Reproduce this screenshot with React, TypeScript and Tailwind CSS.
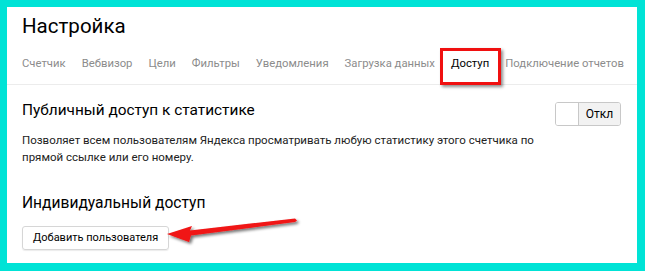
import React from "react";

const tabs = [
  "Счетчик",
  "Вебвизор",
  "Цели",
  "Фильтры",
  "Уведомления",
  "Загрузка данных",
  "Доступ",
  "Подключение отчетов",
];

export default function App() {
  return (
    <div
      className="relative w-[645px] h-[271px] bg-[#00e3d6] pl-[7px] pt-[7px] pr-[8px] pb-[8px] overflow-hidden"
      style={{ fontFamily: 'Roboto, "Liberation Sans", Arial, sans-serif' }}
    >
      <div className="relative bg-white h-full flex flex-col">
        <div className="mt-[4px] px-[15px] text-[20.5px] leading-[30px] text-black">
          Настройка
        </div>
        <div className="mt-[7px] h-[37px] flex items-center gap-[16px] px-[15px] border-b border-[#ececec] whitespace-nowrap">
          {tabs.map((t) => (
            <div
              key={t}
              className={
                "relative h-full flex items-center pb-[3px] text-[11.3px] " +
                (t === "Доступ" ? "text-black" : "text-[#8c8c8c]")
              }
            >
              {t}
              {t === "Доступ" && (
                <div className="absolute -left-[11px] -right-[12px] top-0 -bottom-[1px] border-[3px] border-[#f01010] shadow-[2px_2px_3px_rgba(0,0,0,0.45)]" />
              )}
            </div>
          ))}
        </div>
        <div className="flex justify-between items-start px-[15px]">
          <div className="mt-[14px] text-[15.4px] leading-[22px] text-black">
            Публичный доступ к статистике
          </div>
          <div className="mt-[17px] mr-[1px] flex h-[24px] w-[66px] rounded-[3px] border border-[#c8c8c8] overflow-hidden">
            <div className="w-[23px] h-full bg-white border-r border-[#c8c8c8]" />
            <div className="flex-1 bg-[#f2f2f2] flex items-center justify-center text-[12px] text-black">
              Откл
            </div>
          </div>
        </div>
        <div className="mt-[6px] px-[15px] text-[11.5px] leading-[17px] text-[#222] whitespace-nowrap">
          Позволяет всем пользователям Яндекса просматривать любую статистику этого счетчика по
          <br />
          прямой ссылке или его номеру.
        </div>
        <div className="mt-[26px] px-[15px] text-[15.6px] leading-[22px] text-black">
          Индивидуальный доступ
        </div>
        <div className="mt-[10px] px-[15px]">
          <div className="inline-flex items-center h-[24px] px-[10px] rounded-[3px] border border-[#d6d6d6] shadow-[0_1px_1px_rgba(0,0,0,0.08)] text-[11px] text-black">
            Добавить пользователя
          </div>
        </div>
      </div>
      <svg
        className="absolute inset-0 pointer-events-none"
        width="645"
        height="271"
        viewBox="0 0 645 271"
      >
        <defs>
          <filter id="sh" x="-20%" y="-50%" width="140%" height="200%">
            <feGaussianBlur in="SourceAlpha" stdDeviation="1.5" />
            <feOffset dx="2" dy="2" result="b" />
            <feComponentTransfer>
              <feFuncA type="linear" slope="0.55" />
            </feComponentTransfer>
            <feMerge>
              <feMergeNode />
              <feMergeNode in="SourceGraphic" />
            </feMerge>
          </filter>
        </defs>
        <polygon
          filter="url(#sh)"
          fill="#f01414"
          points="167,234 192,226 190,230.5 295,218.5 297,220.5 295,222 191,235.5 189,242"
        />
      </svg>
    </div>
  );
}
